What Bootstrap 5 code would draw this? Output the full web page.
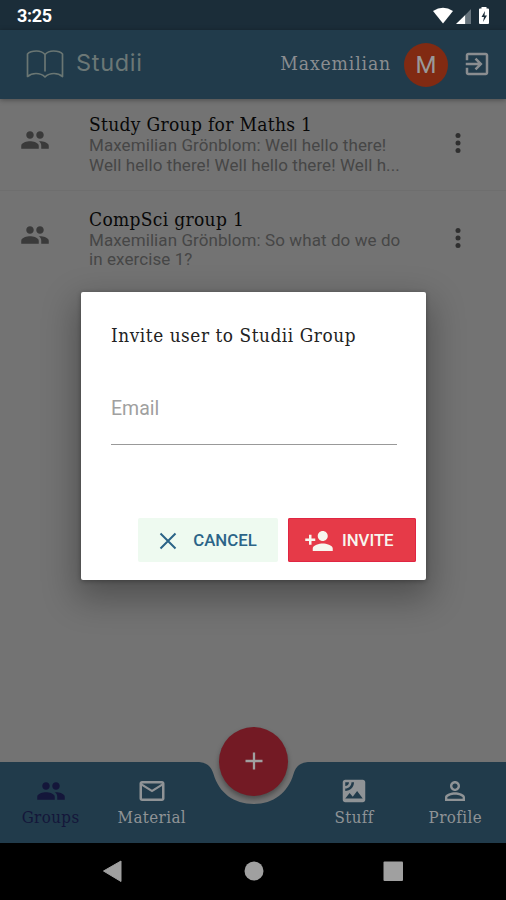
<!DOCTYPE html>
<html lang="en">
<head>
<meta charset="utf-8">
<meta name="viewport" content="width=device-width, initial-scale=1">
<title>Studii</title>
<link href="https://cdn.jsdelivr.net/npm/bootstrap@5.3.0/dist/css/bootstrap.min.css" rel="stylesheet">
<style>
body{font-family:Roboto,"Liberation Sans",sans-serif;background:#737373;overflow:hidden}
.phone{width:506px;height:900px;background:#737373;overflow:hidden}
.slab{font-family:"DejaVu Serif Condensed","DejaVu Serif",serif;font-stretch:condensed}
.ico{width:30px;height:30px;fill:currentColor;display:block;flex:none}
.statusbar{height:30px;background:#1b2d39;color:#fff;padding:2px 15px 0 17px}
.clock{font-size:18px;font-weight:700;line-height:28px;letter-spacing:-.3px}
.topbar{height:68.5px;background:#213b4b;padding:0 14px 0 26px;box-shadow:0 1px 5px rgba(0,0,0,.35);z-index:1}
.brand{font-family:Inter,sans-serif;font-size:23.5px;font-weight:400;letter-spacing:.7px;color:#6b7776;line-height:28px;margin:-2px 0 0 12px}
.username{font-size:19.2px;color:#8a8d90;letter-spacing:.85px}
.avatar{width:44px;height:44px;background:#812a12;color:#999;font-size:24px;font-weight:400;margin:1px 14px 0 13px}
.chat{height:94.5px;padding:13.5px 33px 0 20px}
.chat+.chat{position:relative}
.chat:first-child{box-shadow:0 -1px 0 #6e6e6e inset;height:92px;margin-bottom:2.5px}
.chat .ico{color:#3a3a3a;margin:13px 39px 0 0}
.chat-title{font-size:19px;line-height:24px;color:#080808;letter-spacing:.32px}
.chat-text{font-size:17px;line-height:19.8px;color:#464646;letter-spacing:.08px;width:325px}
.chat .dots{color:#2f2f2f;margin:16px 0 0 auto}
.dock{height:80.5px;color:#8f9396}
.dock-shape{left:0;top:0;width:506px;height:81px}
.dock-item{width:20%;padding-top:14px}
.dock-label{font-size:16.8px;line-height:22px;letter-spacing:.4px}
.active-tab{color:#14163a}
.fab{left:219px;top:-35px;width:69px;height:69px;background:#731a24;color:#a0a0a0;box-shadow:0 3px 5px rgba(0,0,0,.35)}
.sysbar{height:58px;background:#000}
.dialog{left:81px;top:292px;width:345px;height:288px;border-radius:2px;padding:31px 10.500px 18px 30px;box-shadow:0 14px 34px 5px rgba(0,0,0,.30),0 1px 5px rgba(0,0,0,.3)}
.dialog-title{font-size:18.8px;line-height:26px;color:#222;letter-spacing:.57px}
.email{font-size:19.5px;line-height:24px;color:#999;border:0;border-bottom:1.5px solid #999;border-radius:0;padding:0 0 24px;margin-top:47px;width:286px;height:49px}
.email::placeholder{color:#a0a0a0;opacity:1}
.act{height:44px;border:0;border-radius:2px;padding:2px 0 0;font-size:16.8px;font-weight:500}
.act-cancel,.act-cancel:hover{width:140px;background:#eefaf0;color:#2b6488}
.act-invite,.act-invite:hover{width:127.5px;background:#e63a48;color:#f7f6ee;box-shadow:inset 0 0 0 1px #e02543;padding-right:6px}
</style>
</head>
<body>
<svg class="d-none">
<symbol id="group" viewBox="0 0 24 24"><path d="M16 11c1.66 0 2.99-1.34 2.99-3S17.66 5 16 5c-1.66 0-3 1.34-3 3s1.34 3 3 3zm-8 0c1.66 0 2.99-1.34 2.99-3S9.66 5 8 5C6.34 5 5 6.34 5 8s1.34 3 3 3zm0 2c-2.33 0-7 1.17-7 3.5V19h14v-2.5c0-2.33-4.67-3.5-7-3.5zm8 0c-.29 0-.62.02-.97.05 1.16.84 1.97 1.97 1.97 3.45V19h6v-2.5c0-2.33-4.67-3.5-7-3.5z"/></symbol>
<symbol id="more" viewBox="0 0 24 24"><circle cx="12" cy="6" r="2"/><circle cx="12" cy="12" r="2"/><circle cx="12" cy="18" r="2"/></symbol>
</svg>
<main class="phone position-relative d-flex flex-column">
  <header class="statusbar d-flex align-items-center justify-content-between">
    <span class="clock">3:25</span>
    <svg width="60" height="22" viewBox="0 0 60 22"><path fill="#fff" d="M2 6Q12 -.5 22 6L12 18.500Z"/><path fill="#fff" d="M25 19 34.500 9.800V19Z"/><path fill="#67747d" d="M34.500 9.800 40 4v15h-5.500Z"/><path fill="#fff" d="M50.500 3.500V2h5v1.500H57q1 0 1 1V18q0 1-1 1h-8q-1 0-1-1V4.500q0-1 1-1Z"/><path fill="#1b2d39" d="M54 6l-3.500 6H53l-1 5 4-6.500h-2.500Z"/></svg>
  </header>
  <nav class="topbar d-flex align-items-center position-relative">
    <svg width="38" height="30" viewBox="0 0 38 30" fill="none" stroke="#6a7673" stroke-width="1.700" stroke-linejoin="round"><path d="M19 5.500Q16 2 10.500 2 4 2 1.500 5V27.500Q5 24.500 10 24.500 15.500 24.500 19 28 22.500 24.500 28 24.500 33 24.500 36.500 27.500V5Q34 2 27.500 2 22 2 19 5.500V22.500"/></svg>
    <span class="brand">Studii</span>
    <span class="username slab ms-auto">Maxemilian</span>
    <span class="avatar rounded-circle d-flex align-items-center justify-content-center">M</span>
    <svg class="ico" viewBox="0 0 24 24" style="color:#8a8d90"><path d="M10.090 15.590L11.500 17l5-5-5-5-1.410 1.410L12.670 11H3v2h9.670l-2.580 2.590zM19 3H5c-1.110 0-2 .9-2 2v4h2V5h14v14H5v-4H3v4c0 1.100.89 2 2 2h14c1.100 0 2-.9 2-2V5c0-1.100-.9-2-2-2z"/></svg>
  </nav>
  <section class="flex-grow-1">
    <article class="chat d-flex align-items-start">
      <svg class="ico"><use href="#group"/></svg>
      <div><div class="chat-title slab">Study Group for Maths 1</div><div class="chat-text">Maxemilian Grönblom: Well hello there!<br>Well hello there! Well hello there! Well h...</div></div>
      <svg class="ico dots"><use href="#more"/></svg>
    </article>
    <article class="chat d-flex align-items-start">
      <svg class="ico"><use href="#group"/></svg>
      <div><div class="chat-title slab">CompSci group 1</div><div class="chat-text">Maxemilian Grönblom: So what do we do<br>in exercise 1?</div></div>
      <svg class="ico dots"><use href="#more"/></svg>
    </article>
  </section>
  <nav class="dock position-relative">
    <svg class="dock-shape position-absolute" viewBox="0 0 506 81"><path fill="#213b4b" d="M0 0H196C207 0 211 4 213.500 12C219 31 234 42 253.500 42C273 42 288 31 293.500 12C296 4 300 0 311 0H506V81H0Z"/></svg>
    <div class="d-flex position-relative slab">
      <div class="dock-item active-tab d-flex flex-column align-items-center"><svg class="ico"><use href="#group"/></svg><span class="dock-label">Groups</span></div>
      <div class="dock-item d-flex flex-column align-items-center"><svg class="ico" viewBox="0 0 24 24"><path d="M20 4H4c-1.100 0-2 .9-2 2v12c0 1.100.9 2 2 2h16c1.100 0 2-.9 2-2V6c0-1.100-.9-2-2-2zm0 14H4V8l8 5 8-5v10zm-8-7L4 6h16l-8 5z"/></svg><span class="dock-label">Material</span></div>
      <div class="dock-item"></div>
      <div class="dock-item d-flex flex-column align-items-center"><svg class="ico" viewBox="0 0 24 24"><path d="M19 3H5c-1.100 0-2 .9-2 2v14c0 1.100.9 2 2 2h14c1.100 0 2-.9 2-2V5c0-1.100-.9-2-2-2zM5 4.990h3C8 6.650 6.660 8 5 8V4.990zM5 12v-2c2.760 0 5-2.250 5-5.010h2C12 8.860 8.870 12 5 12zm0 6l3.500-4.500 2.500 3.010L14.500 12l4.500 6H5z"/></svg><span class="dock-label">Stuff</span></div>
      <div class="dock-item d-flex flex-column align-items-center"><svg class="ico" viewBox="0 0 24 24"><path d="M12 5.900c1.160 0 2.100.94 2.100 2.100s-.94 2.100-2.100 2.100S9.900 9.160 9.900 8s.94-2.100 2.100-2.100m0 9c2.970 0 6.100 1.460 6.100 2.100v1.100H5.900V17c0-.64 3.130-2.100 6.100-2.100M12 4C9.790 4 8 5.790 8 8s1.790 4 4 4 4-1.790 4-4-1.790-4-4-4zm0 9c-2.670 0-8 1.340-8 4v3h16v-3c0-2.660-5.330-4-8-4z"/></svg><span class="dock-label">Profile</span></div>
    </div>
    <button class="fab btn rounded-circle border-0 p-0 position-absolute d-flex align-items-center justify-content-center" aria-label="Add"><svg width="18" height="18" viewBox="0 0 18 18" stroke="currentColor" stroke-width="2.300"><path d="M9 0.500v17M.5 9h17"/></svg></button>
  </nav>
  <footer class="sysbar">
    <svg width="506" height="58" fill="#a0a0a0"><path d="M103.500 29 121 19v20.500Z" stroke="#a0a0a0" stroke-linejoin="round"/><circle cx="254" cy="29" r="9.500"/><rect x="383.500" y="19.500" width="19.500" height="19.500" rx="1"/></svg>
  </footer>
  <div class="dialog position-absolute bg-white d-flex flex-column z-3" role="dialog">
    <div class="dialog-title slab">Invite user to Studii Group</div>
    <input class="email form-control shadow-none" type="email" placeholder="Email">
    <div class="d-flex justify-content-end mt-auto" style="gap:10px">
      <button class="btn act act-cancel d-flex align-items-center justify-content-center"><svg class="me-3" width="18" height="18" viewBox="0 0 18 18" stroke="currentColor" stroke-width="2"><path d="M1.500 1.500l15 15M16.500 1.500l-15 15"/></svg>CANCEL</button>
      <button class="btn act act-invite d-flex align-items-center justify-content-center"><svg class="ico me-2" viewBox="0 0 24 24"><path d="M15 12c2.210 0 4-1.790 4-4s-1.790-4-4-4-4 1.790-4 4 1.790 4 4 4zm-9-2V7H4v3H1v2h3v3h2v-3h3v-2H6zm9 4c-2.670 0-8 1.340-8 4v2h16v-2c0-2.660-5.330-4-8-4z"/></svg>INVITE</button>
    </div>
  </div>
</main>
<script src="https://cdn.jsdelivr.net/npm/bootstrap@5.3.0/dist/js/bootstrap.bundle.min.js"></script>
</body>
</html>
